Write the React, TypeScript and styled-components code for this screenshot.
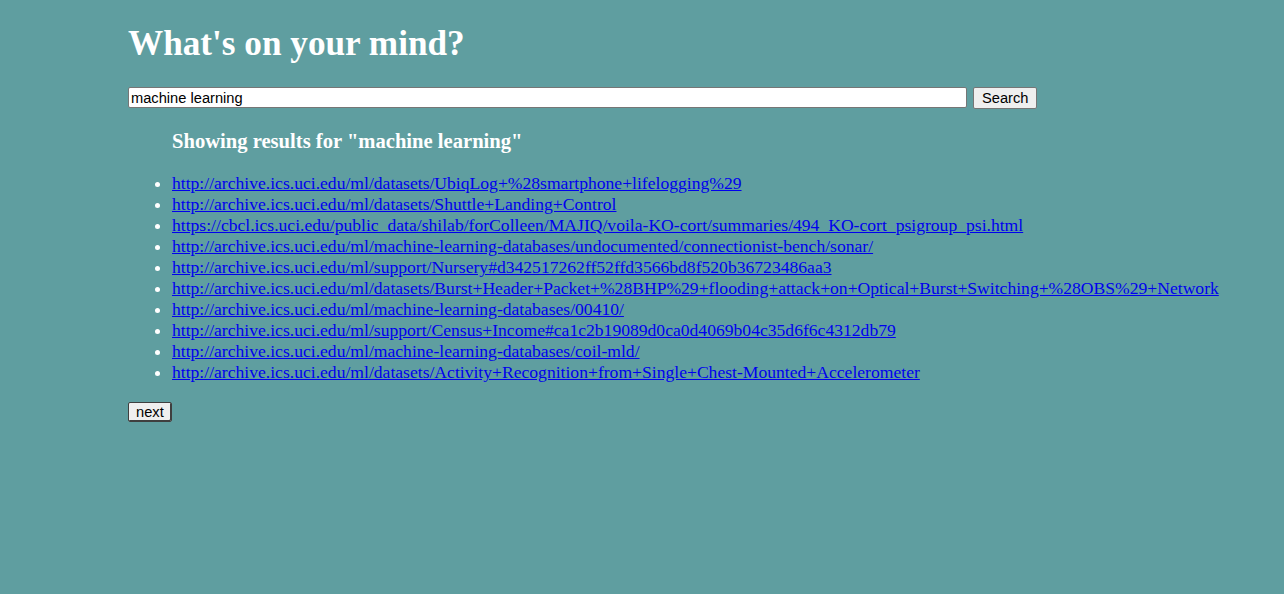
import React from "react";
import styled, { createGlobalStyle } from "styled-components";

const Global = createGlobalStyle`
  html, body { margin: 0; padding: 0; }
  body {
    background: #5f9ea0;
    font-family: "Liberation Serif", "Times New Roman", serif;
    min-height: 594px;
  }
`;

const Page = styled.main`
  padding: 8px 0 8px 128px;
`;

const Title = styled.h1`
  margin: 16px 0 22.5px;
  font-size: 35.2px;
  font-weight: bold;
  color: #ffffff;
`;

const SearchRow = styled.form`
  display: flex;
  align-items: center;
  gap: 6px;
  height: 22px;
`;

const SearchInput = styled.input`
  width: 839px;
  height: 21px;
  box-sizing: border-box;
  padding: 1px 2px;
  border: 1px solid #767676;
  border-radius: 2px;
  background: #ffffff;
  font-family: "Liberation Sans", Arial, sans-serif;
  font-size: 14.67px;
  color: #000;
  outline: none;
`;

const Button = styled.button<{ $strong?: boolean }>`
  box-sizing: border-box;
  height: ${(p) => (p.$strong ? "20px" : "22px")};
  padding: 1px ${(p) => (p.$strong ? "7px" : "8px")} 0;
  border: 1px solid ${(p) => (p.$strong ? "#3f3f3f" : "#767676")};
  box-shadow: ${(p) => (p.$strong ? "inset -1px -1px 0 #3f3f3f" : "none")};
  border-radius: 2px;
  background: #efefef;
  font-family: "Liberation Sans", Arial, sans-serif;
  font-size: 14.67px;
  line-height: 1;
  color: #000;
`;

const Results = styled.section`
  padding-left: 44px;
`;

const ResultsHeading = styled.h3`
  margin: 21px 0 20.5px;
  font-size: 20.6px;
  font-weight: bold;
  color: #ffffff;
`;

const List = styled.ul`
  margin: 0;
  padding: 0;
  list-style: disc;
  color: #ffffff;
  font-size: 17.6px;
  line-height: 21px;
`;

const Link = styled.a`
  color: #0000ee;
  text-decoration: underline;
`;

const Footer = styled.div`
  margin-top: 18.5px;
  display: flex;
`;

const links = [
  "http://archive.ics.uci.edu/ml/datasets/UbiqLog+%28smartphone+lifelogging%29",
  "http://archive.ics.uci.edu/ml/datasets/Shuttle+Landing+Control",
  "https://cbcl.ics.uci.edu/public_data/shilab/forColleen/MAJIQ/voila-KO-cort/summaries/494_KO-cort_psigroup_psi.html",
  "http://archive.ics.uci.edu/ml/machine-learning-databases/undocumented/connectionist-bench/sonar/",
  "http://archive.ics.uci.edu/ml/support/Nursery#d342517262ff52ffd3566bd8f520b36723486aa3",
  "http://archive.ics.uci.edu/ml/datasets/Burst+Header+Packet+%28BHP%29+flooding+attack+on+Optical+Burst+Switching+%28OBS%29+Network",
  "http://archive.ics.uci.edu/ml/machine-learning-databases/00410/",
  "http://archive.ics.uci.edu/ml/support/Census+Income#ca1c2b19089d0ca0d4069b04c35d6f6c4312db79",
  "http://archive.ics.uci.edu/ml/machine-learning-databases/coil-mld/",
  "http://archive.ics.uci.edu/ml/datasets/Activity+Recognition+from+Single+Chest-Mounted+Accelerometer",
];

export default function App() {
  return (
    <>
      <Global />
      <Page>
        <Title>What's on your mind?</Title>
        <SearchRow onSubmit={(e) => e.preventDefault()}>
          <SearchInput defaultValue="machine learning" />
          <Button type="submit">Search</Button>
        </SearchRow>
        <Results>
          <ResultsHeading>Showing results for "machine learning"</ResultsHeading>
          <List>
            {links.map((l) => (
              <li key={l}>
                <Link href={l}>{l}</Link>
              </li>
            ))}
          </List>
        </Results>
        <Footer>
          <Button type="button" $strong>
            next
          </Button>
        </Footer>
      </Page>
    </>
  );
}
